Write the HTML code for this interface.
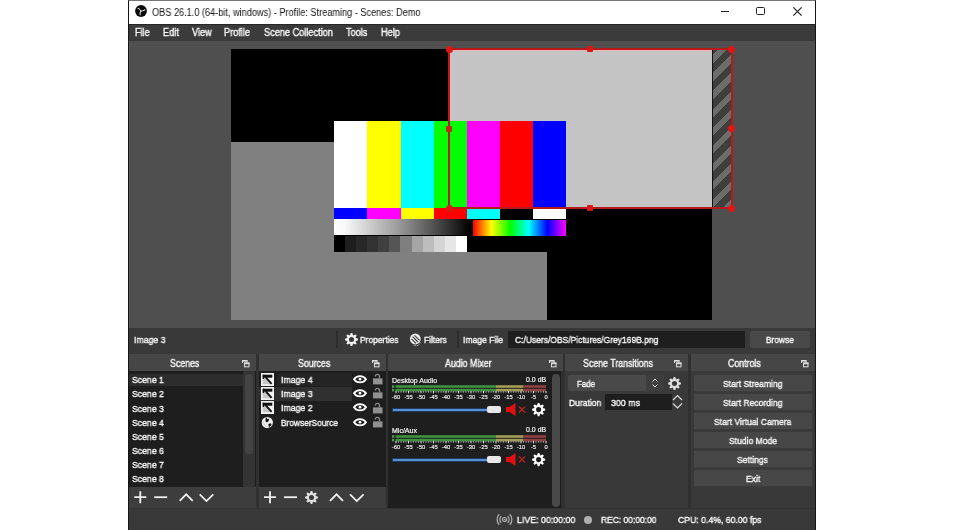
<!DOCTYPE html>
<html><head><meta charset="utf-8">
<style>
*{margin:0;padding:0;box-sizing:border-box}
html,body{width:960px;height:530px;overflow:hidden;background:#fff;font-family:"Liberation Sans",sans-serif}
.a{position:absolute}
.t{position:absolute;white-space:nowrap;color:#e1e0e1;line-height:1;will-change:transform}
svg{position:absolute;overflow:visible}
</style></head><body>
<div class="a" style="left:128px;top:0px;width:688px;height:530px;background:#3a393a;border-left:1px solid #151515;border-right:1px solid #151515;border-top:1px solid #777"></div>
<div class="a" style="left:129px;top:1px;width:686px;height:23px;background:#fff;"></div>
<svg style="left:135.2px;top:5.3px" width="12" height="12" viewBox="-6 -6 12 12"><circle r="5.9" fill="#0a0a0a"/><g fill="none" stroke="#fff" stroke-width="0.9"><path d="M0 0L-0.8 -1.2Q-2.2 -3 -3.4 -2.6"/><path d="M0 0L-0.8 -1.2Q-2.2 -3 -3.4 -2.6" transform="rotate(120)"/><path d="M0 0L-0.8 -1.2Q-2.2 -3 -3.4 -2.6" transform="rotate(240)"/></g></svg>
<div class="t" style="left:151.50px;top:7.54px;font-size:10px;color:#111;transform:scaleX(0.9167);transform-origin:0 0;">OBS 26.1.0 (64-bit, windows) - Profile: Streaming - Scenes: Demo</div>
<div class="a" style="left:721px;top:11px;width:8px;height:1.2px;background:#222;"></div>
<div class="a" style="left:756px;top:7px;width:9px;height:8.3px;background:transparent;border:1.3px solid #222;border-radius:1.5px"></div>
<svg style="left:792.5px;top:7px" width="9" height="9" viewBox="0 0 9 9"><path d="M0.4 0.4L8.6 8.6M8.6 0.4L0.4 8.6" stroke="#222" stroke-width="1.2"/></svg>
<div class="a" style="left:129px;top:24px;width:686px;height:17px;background:#3b3b3b;border-top:1.5px solid #262626"></div>
<div class="t" style="left:135.30px;top:28.04px;font-size:10px;color:#f6f6f6;transform:scaleX(0.9170);transform-origin:0 0;-webkit-text-stroke:0.4px #f6f6f6;">File</div>
<div class="t" style="left:162.50px;top:28.04px;font-size:10px;color:#f6f6f6;transform:scaleX(0.9170);transform-origin:0 0;-webkit-text-stroke:0.4px #f6f6f6;">Edit</div>
<div class="t" style="left:191.60px;top:28.04px;font-size:10px;color:#f6f6f6;transform:scaleX(0.9170);transform-origin:0 0;-webkit-text-stroke:0.4px #f6f6f6;">View</div>
<div class="t" style="left:224.40px;top:28.04px;font-size:10px;color:#f6f6f6;transform:scaleX(0.9170);transform-origin:0 0;-webkit-text-stroke:0.4px #f6f6f6;">Profile</div>
<div class="t" style="left:264.00px;top:28.04px;font-size:10px;color:#f6f6f6;transform:scaleX(0.9170);transform-origin:0 0;-webkit-text-stroke:0.4px #f6f6f6;">Scene Collection</div>
<div class="t" style="left:346.20px;top:28.04px;font-size:10px;color:#f6f6f6;transform:scaleX(0.9170);transform-origin:0 0;-webkit-text-stroke:0.4px #f6f6f6;">Tools</div>
<div class="t" style="left:381.20px;top:28.04px;font-size:10px;color:#f6f6f6;transform:scaleX(0.9170);transform-origin:0 0;-webkit-text-stroke:0.4px #f6f6f6;">Help</div>
<div class="a" style="left:129px;top:41px;width:686px;height:287px;background:#4f4f4f;border-left:1px solid #5a5a5a"></div>
<div class="a" style="left:231px;top:49px;width:481px;height:271px;background:#000;overflow:hidden">
  <div class="a" style="left:0;top:93px;width:316px;height:178px;background:#808080"></div>
  <div class="a" style="left:218px;top:0;width:263px;height:159px;background:#c4c4c4"></div>
</div>
<div class="a" style="left:712px;top:50px;width:19px;height:158px;background:repeating-linear-gradient(-45deg,#6c6c6c 0,#6c6c6c 5.9px,#3e3e3e 5.9px,#3e3e3e 12.8px);border-left:1px solid #111"></div>
<div class="a" style="left:334px;top:121px;width:232px;height:131px;background:#000;overflow:hidden">
<div class="a" style="left:0px;top:0;width:33px;height:87px;background:#fff"></div>
<div class="a" style="left:0px;top:87px;width:33px;height:11px;background:#00f"></div>
<div class="a" style="left:33px;top:0;width:34px;height:87px;background:#ff0"></div>
<div class="a" style="left:33px;top:87px;width:34px;height:11px;background:#f0f"></div>
<div class="a" style="left:67px;top:0;width:33px;height:87px;background:#0ff"></div>
<div class="a" style="left:67px;top:87px;width:33px;height:11px;background:#ff0"></div>
<div class="a" style="left:100px;top:0;width:33px;height:87px;background:#0f0"></div>
<div class="a" style="left:100px;top:87px;width:33px;height:11px;background:#f00"></div>
<div class="a" style="left:133px;top:0;width:33px;height:87px;background:#f0f"></div>
<div class="a" style="left:133px;top:87px;width:33px;height:11px;background:#0ff"></div>
<div class="a" style="left:166px;top:0;width:33px;height:87px;background:#f00"></div>
<div class="a" style="left:166px;top:87px;width:33px;height:11px;background:#000"></div>
<div class="a" style="left:199px;top:0;width:33px;height:87px;background:#00f"></div>
<div class="a" style="left:199px;top:87px;width:33px;height:11px;background:#fff"></div>
<div class="a" style="left:0;top:98px;width:136px;height:16px;background:linear-gradient(90deg,#fff 0%,#f8f8f8 8%,#999 48%,#555 72%,#1a1a1a 92%,#000 100%)"></div>
<div class="a" style="left:139px;top:99px;width:93px;height:16px;background:linear-gradient(90deg,#f00 0%,#ff0 20%,#0f0 40%,#0ff 60%,#00f 80%,#f0f 100%)"></div>
<div class="a" style="left:0;top:115px;width:133px;height:16px;background:linear-gradient(90deg,#000 0.00% 8.33%,#1e1e1e 8.33% 16.67%,#282828 16.67% 25.00%,#333 25.00% 33.33%,#404040 33.33% 41.67%,#555 41.67% 50.00%,#7f7f7f 50.00% 58.33%,#a5a5a5 58.33% 66.67%,#bdbdbd 66.67% 75.00%,#d4d4d4 75.00% 83.33%,#e6e6e6 83.33% 91.67%,#fff 91.67% 100.00%)"></div>
</div>
<div class="a" style="left:450px;top:50px;width:262px;height:1px;background:#f2b4b4"></div>
<div class="a" style="left:450px;top:50px;width:1px;height:71px;background:#f2b4b4"></div>
<div class="a" style="left:448px;top:48px;width:285px;height:161px;border:2px solid #b81a1a"></div>
<div class="a" style="left:445.5px;top:45.5px;width:7px;height:7px;background:#e01515;border-radius:50%"></div>
<div class="a" style="left:728.0px;top:45.5px;width:7px;height:7px;background:#e01515;border-radius:50%"></div>
<div class="a" style="left:728.0px;top:125.0px;width:7px;height:7px;background:#e01515;border-radius:50%"></div>
<div class="a" style="left:445.5px;top:204.5px;width:7px;height:7px;background:#e01515;border-radius:50%"></div>
<div class="a" style="left:728.0px;top:204.5px;width:7px;height:7px;background:#e01515;border-radius:50%"></div>
<div class="a" style="left:587px;top:46px;width:6px;height:6px;background:#d81818;border-radius:1px"></div>
<div class="a" style="left:587px;top:205px;width:6px;height:6px;background:#d81818;border-radius:1px"></div>
<div class="a" style="left:446px;top:125.5px;width:6px;height:6px;background:#c02a10;border-radius:1px"></div>
<div class="a" style="left:129px;top:328px;width:686px;height:24px;background:#3a393a;"></div>
<div class="t" style="left:133.50px;top:334.96px;font-size:9.5px;color:#f6f6f6;transform:scaleX(0.9206);transform-origin:0 0;-webkit-text-stroke:0.4px #f6f6f6;">Image 3</div>
<div class="a" style="left:336px;top:331px;width:2px;height:16.5px;background:#2e2d2e;"></div>
<svg style="left:344.9px;top:332.9px" width="13.0" height="13.0" viewBox="-10 -10 20 20"><path fill="#f2f2f2" d="M-2.53 -6.10 L-1.22 -9.93 L1.22 -9.93 L2.53 -6.10 L6.16 -7.88 L7.88 -6.16 L6.10 -2.53 L9.93 -1.22 L9.93 1.22 L6.10 2.53 L7.88 6.16 L6.16 7.88 L2.53 6.10 L1.22 9.93 L-1.22 9.93 L-2.53 6.10 L-6.16 7.88 L-7.88 6.16 L-6.10 2.53 L-9.93 1.22 L-9.93 -1.22 L-6.10 -2.53 L-7.88 -6.16 L-6.16 -7.88Z"/><circle r="3.9" fill="#3a393a"/></svg>
<div class="t" style="left:359.70px;top:334.76px;font-size:9.5px;color:#f6f6f6;transform:scaleX(0.8892);transform-origin:0 0;-webkit-text-stroke:0.4px #f6f6f6;">Properties</div>
<svg style="left:408.5px;top:332.5px" width="14" height="14" viewBox="0 0 14 14"><circle cx="6.3" cy="6" r="5.4" fill="#eeeeee"/><path d="M3.6 3.6l5.4 5.4M5.6 2.4l5 5M2.4 5.8l4.6 4.6" stroke="#3a393a" stroke-width="1.1"/><path d="M4.5 12.3A5 5 0 0 0 11.6 8.8" stroke="#d0d0d0" stroke-width="1" stroke-dasharray="1 0.8" fill="none"/></svg>
<div class="t" style="left:423.75px;top:334.76px;font-size:9.5px;color:#f6f6f6;transform:scaleX(0.8816);transform-origin:0 0;-webkit-text-stroke:0.4px #f6f6f6;">Filters</div>
<div class="a" style="left:456.5px;top:331px;width:2px;height:16.5px;background:#2e2d2e;"></div>
<div class="t" style="left:463.40px;top:334.76px;font-size:9.5px;color:#f6f6f6;transform:scaleX(0.9041);transform-origin:0 0;-webkit-text-stroke:0.4px #f6f6f6;">Image File</div>
<div class="a" style="left:508px;top:331px;width:236.5px;height:16.5px;background:#1f1e1f;"></div>
<div class="t" style="left:515.20px;top:334.76px;font-size:9.5px;color:#f6f6f6;transform:scaleX(0.8928);transform-origin:0 0;-webkit-text-stroke:0.4px #f6f6f6;">C:/Users/OBS/Pictures/Grey169B.png</div>
<div class="a" style="left:750px;top:331px;width:60px;height:16.5px;background:#4a494a;border-radius:2px"></div>
<div class="t" style="left:766.40px;top:334.76px;font-size:9.5px;color:#f6f6f6;transform:scaleX(0.8776);transform-origin:0 0;-webkit-text-stroke:0.4px #f6f6f6;">Browse</div>
<div class="a" style="left:255.5px;top:354px;width:3.0px;height:154px;background:#303030;"></div>
<div class="a" style="left:386px;top:354px;width:2px;height:154px;background:#303030;"></div>
<div class="a" style="left:561px;top:354px;width:3.5px;height:154px;background:#303030;"></div>
<div class="a" style="left:688px;top:354px;width:2.5px;height:154px;background:#303030;"></div>
<div class="a" style="left:129px;top:354px;width:126.5px;height:17px;background:#474647;"></div>
<div class="t" style="left:169.57px;top:358.54px;font-size:10px;color:#f6f6f6;transform:scaleX(0.8800);transform-origin:0 0;-webkit-text-stroke:0.4px #f6f6f6;">Scenes</div>
<svg style="left:241.5px;top:360px" width="8" height="8" viewBox="0 0 8 8"><path d="M0.5 3V0.5h4.5V2.5" fill="none" stroke="#e1e0e1" stroke-width="1"/><rect x="0" y="0" width="5.5" height="1.6" fill="#e1e0e1"/><rect x="2.5" y="3" width="4.5" height="3.8" fill="none" stroke="#e1e0e1" stroke-width="1"/><rect x="2" y="2.6" width="5.5" height="1.6" fill="#e1e0e1"/></svg>
<div class="a" style="left:258.5px;top:354px;width:127.5px;height:17px;background:#474647;"></div>
<div class="t" style="left:298.11px;top:358.54px;font-size:10px;color:#f6f6f6;transform:scaleX(0.8800);transform-origin:0 0;-webkit-text-stroke:0.4px #f6f6f6;">Sources</div>
<svg style="left:372px;top:360px" width="8" height="8" viewBox="0 0 8 8"><path d="M0.5 3V0.5h4.5V2.5" fill="none" stroke="#e1e0e1" stroke-width="1"/><rect x="0" y="0" width="5.5" height="1.6" fill="#e1e0e1"/><rect x="2.5" y="3" width="4.5" height="3.8" fill="none" stroke="#e1e0e1" stroke-width="1"/><rect x="2" y="2.6" width="5.5" height="1.6" fill="#e1e0e1"/></svg>
<div class="a" style="left:388px;top:354px;width:174.5px;height:17px;background:#474647;"></div>
<div class="t" style="left:445.02px;top:358.54px;font-size:10px;color:#f6f6f6;transform:scaleX(0.8800);transform-origin:0 0;-webkit-text-stroke:0.4px #f6f6f6;">Audio Mixer</div>
<svg style="left:548.5px;top:360px" width="8" height="8" viewBox="0 0 8 8"><path d="M0.5 3V0.5h4.5V2.5" fill="none" stroke="#e1e0e1" stroke-width="1"/><rect x="0" y="0" width="5.5" height="1.6" fill="#e1e0e1"/><rect x="2.5" y="3" width="4.5" height="3.8" fill="none" stroke="#e1e0e1" stroke-width="1"/><rect x="2" y="2.6" width="5.5" height="1.6" fill="#e1e0e1"/></svg>
<div class="a" style="left:564.5px;top:354px;width:123.5px;height:17px;background:#474647;"></div>
<div class="t" style="left:583.27px;top:358.54px;font-size:10px;color:#f6f6f6;transform:scaleX(0.8800);transform-origin:0 0;-webkit-text-stroke:0.4px #f6f6f6;">Scene Transitions</div>
<svg style="left:674px;top:360px" width="8" height="8" viewBox="0 0 8 8"><path d="M0.5 3V0.5h4.5V2.5" fill="none" stroke="#e1e0e1" stroke-width="1"/><rect x="0" y="0" width="5.5" height="1.6" fill="#e1e0e1"/><rect x="2.5" y="3" width="4.5" height="3.8" fill="none" stroke="#e1e0e1" stroke-width="1"/><rect x="2" y="2.6" width="5.5" height="1.6" fill="#e1e0e1"/></svg>
<div class="a" style="left:690.5px;top:354px;width:124.5px;height:17px;background:#474647;"></div>
<div class="t" style="left:728.37px;top:358.54px;font-size:10px;color:#f6f6f6;transform:scaleX(0.8800);transform-origin:0 0;-webkit-text-stroke:0.4px #f6f6f6;">Controls</div>
<svg style="left:801px;top:360px" width="8" height="8" viewBox="0 0 8 8"><path d="M0.5 3V0.5h4.5V2.5" fill="none" stroke="#e1e0e1" stroke-width="1"/><rect x="0" y="0" width="5.5" height="1.6" fill="#e1e0e1"/><rect x="2.5" y="3" width="4.5" height="3.8" fill="none" stroke="#e1e0e1" stroke-width="1"/><rect x="2" y="2.6" width="5.5" height="1.6" fill="#e1e0e1"/></svg>
<div class="a" style="left:129px;top:371px;width:126.5px;height:116px;background:#1f1e1f;"></div>
<div class="a" style="left:129px;top:373.5px;width:114px;height:12.5px;background:#2e2d2e;"></div>
<div class="t" style="left:131.80px;top:375.26px;font-size:9.5px;color:#f6f6f6;transform:scaleX(0.9151);transform-origin:0 0;-webkit-text-stroke:0.4px #f6f6f6;">Scene 1</div>
<div class="t" style="left:131.80px;top:389.43px;font-size:9.5px;color:#f6f6f6;transform:scaleX(0.9151);transform-origin:0 0;-webkit-text-stroke:0.4px #f6f6f6;">Scene 2</div>
<div class="t" style="left:131.80px;top:403.60px;font-size:9.5px;color:#f6f6f6;transform:scaleX(0.9151);transform-origin:0 0;-webkit-text-stroke:0.4px #f6f6f6;">Scene 3</div>
<div class="t" style="left:131.80px;top:417.77px;font-size:9.5px;color:#f6f6f6;transform:scaleX(0.9151);transform-origin:0 0;-webkit-text-stroke:0.4px #f6f6f6;">Scene 4</div>
<div class="t" style="left:131.80px;top:431.94px;font-size:9.5px;color:#f6f6f6;transform:scaleX(0.9151);transform-origin:0 0;-webkit-text-stroke:0.4px #f6f6f6;">Scene 5</div>
<div class="t" style="left:131.80px;top:446.11px;font-size:9.5px;color:#f6f6f6;transform:scaleX(0.9151);transform-origin:0 0;-webkit-text-stroke:0.4px #f6f6f6;">Scene 6</div>
<div class="t" style="left:131.80px;top:460.28px;font-size:9.5px;color:#f6f6f6;transform:scaleX(0.9151);transform-origin:0 0;-webkit-text-stroke:0.4px #f6f6f6;">Scene 7</div>
<div class="t" style="left:131.80px;top:474.45px;font-size:9.5px;color:#f6f6f6;transform:scaleX(0.9151);transform-origin:0 0;-webkit-text-stroke:0.4px #f6f6f6;">Scene 8</div>
<div class="a" style="left:243px;top:371px;width:11.5px;height:116px;background:#353435;"></div>
<div class="a" style="left:244.8px;top:373.5px;width:8.5px;height:80px;background:#454445;border-radius:3px"></div>
<div class="a" style="left:129px;top:487px;width:126.5px;height:21px;background:#3e3d3e;"></div>
<svg style="left:129px;top:487px" width="126" height="21" viewBox="0 0 126 21"><path d="M11.3 4.2v12M5.3 10.2h12" stroke="#f0f0f0" stroke-width="1.8"/><path d="M25.2 10.2h13" stroke="#f0f0f0" stroke-width="1.8"/><path d="M50.7 13.8l6.5-6.5 6.5 6.5" stroke="#f0f0f0" stroke-width="1.8" fill="none"/><path d="M70.7 7.3l6.8 6.8 6.8-6.8" stroke="#f0f0f0" stroke-width="1.8" fill="none"/></svg>
<div class="a" style="left:258.5px;top:371px;width:127.5px;height:116px;background:#1f1e1f;"></div>
<div class="a" style="left:258.5px;top:386.5px;width:93.5px;height:14px;background:#303030;"></div>
<div class="a" style="left:277px;top:372.7px;width:75px;height:13.3px;background:#252425;"></div>
<svg style="left:261px;top:373.0px" width="13" height="13" viewBox="0 0 13 13"><rect x="0" y="0" width="13" height="13" fill="#f4f4f4"/><rect x="1.7" y="1.7" width="9.6" height="3" fill="#111"/><rect x="1.7" y="1.7" width="1.6" height="4.4" fill="#111"/><path d="M1.7 6.1H3.3L4.7 4.7L10.2 11.3H1.7z" fill="#c8c8c8"/><path d="M4.6 4.2l6 6.6" stroke="#111" stroke-width="1.9"/></svg>
<div class="t" style="left:280.50px;top:375.06px;font-size:9.5px;color:#f6f6f6;transform:scaleX(0.9235);transform-origin:0 0;-webkit-text-stroke:0.4px #f6f6f6;">Image 4</div>
<svg style="left:352.5px;top:375.09999999999997px" width="14" height="10" viewBox="0 0 14 10"><path d="M1 4.2C3.6 0 10.4 0 13 4.2 10.4 8.4 3.6 8.4 1 4.2z" fill="none" stroke="#fff" stroke-width="1.8"/><circle cx="7" cy="4.2" r="1.4" fill="#fff"/></svg>
<svg style="left:372.7px;top:374.2px" width="10" height="11" viewBox="0 0 10 11"><rect x="0" y="4.4" width="9.5" height="6" fill="#929192"/><path d="M2.3 2.4a2.1 2.1 0 0 1 4.2 0V4.5" fill="none" stroke="#929192" stroke-width="1.3"/></svg>
<svg style="left:261px;top:387.15px" width="13" height="13" viewBox="0 0 13 13"><rect x="0" y="0" width="13" height="13" fill="#f4f4f4"/><rect x="1.7" y="1.7" width="9.6" height="3" fill="#111"/><rect x="1.7" y="1.7" width="1.6" height="4.4" fill="#111"/><path d="M1.7 6.1H3.3L4.7 4.7L10.2 11.3H1.7z" fill="#c8c8c8"/><path d="M4.6 4.2l6 6.6" stroke="#111" stroke-width="1.9"/></svg>
<div class="t" style="left:280.50px;top:389.21px;font-size:9.5px;color:#f6f6f6;transform:scaleX(0.9235);transform-origin:0 0;-webkit-text-stroke:0.4px #f6f6f6;">Image 3</div>
<svg style="left:352.5px;top:389.24999999999994px" width="14" height="10" viewBox="0 0 14 10"><path d="M1 4.2C3.6 0 10.4 0 13 4.2 10.4 8.4 3.6 8.4 1 4.2z" fill="none" stroke="#fff" stroke-width="1.8"/><circle cx="7" cy="4.2" r="1.4" fill="#fff"/></svg>
<svg style="left:372.7px;top:388.34999999999997px" width="10" height="11" viewBox="0 0 10 11"><rect x="0" y="4.4" width="9.5" height="6" fill="#929192"/><path d="M2.3 2.4a2.1 2.1 0 0 1 4.2 0V4.5" fill="none" stroke="#929192" stroke-width="1.3"/></svg>
<svg style="left:261px;top:401.3px" width="13" height="13" viewBox="0 0 13 13"><rect x="0" y="0" width="13" height="13" fill="#f4f4f4"/><rect x="1.7" y="1.7" width="9.6" height="3" fill="#111"/><rect x="1.7" y="1.7" width="1.6" height="4.4" fill="#111"/><path d="M1.7 6.1H3.3L4.7 4.7L10.2 11.3H1.7z" fill="#c8c8c8"/><path d="M4.6 4.2l6 6.6" stroke="#111" stroke-width="1.9"/></svg>
<div class="t" style="left:280.50px;top:403.36px;font-size:9.5px;color:#f6f6f6;transform:scaleX(0.9235);transform-origin:0 0;-webkit-text-stroke:0.4px #f6f6f6;">Image 2</div>
<svg style="left:352.5px;top:403.4px" width="14" height="10" viewBox="0 0 14 10"><path d="M1 4.2C3.6 0 10.4 0 13 4.2 10.4 8.4 3.6 8.4 1 4.2z" fill="none" stroke="#fff" stroke-width="1.8"/><circle cx="7" cy="4.2" r="1.4" fill="#fff"/></svg>
<svg style="left:372.7px;top:402.5px" width="10" height="11" viewBox="0 0 10 11"><rect x="0" y="4.4" width="9.5" height="6" fill="#929192"/><path d="M2.3 2.4a2.1 2.1 0 0 1 4.2 0V4.5" fill="none" stroke="#929192" stroke-width="1.3"/></svg>
<svg style="left:261px;top:415.84999999999997px" width="13" height="13" viewBox="0 0 13 13"><circle cx="6.3" cy="6.5" r="5.6" fill="#f0f0f0"/><path d="M5.2 1.2L6.6 3.2 8.3 2.4 7.6 5 6 6.6 4.4 5.2 4.6 3z" fill="#111"/><path d="M7.4 8L9.8 7.2 10.6 9 9 10.2 8.4 12 7.6 10z" fill="#111"/><path d="M2.2 5.5Q3 9.5 6 10.5" stroke="#bbb" stroke-width="0.8" fill="none"/></svg>
<div class="t" style="left:280.50px;top:417.51px;font-size:9.5px;color:#f6f6f6;transform:scaleX(0.8761);transform-origin:0 0;-webkit-text-stroke:0.4px #f6f6f6;">BrowserSource</div>
<svg style="left:352.5px;top:417.54999999999995px" width="14" height="10" viewBox="0 0 14 10"><path d="M1 4.2C3.6 0 10.4 0 13 4.2 10.4 8.4 3.6 8.4 1 4.2z" fill="none" stroke="#fff" stroke-width="1.8"/><circle cx="7" cy="4.2" r="1.4" fill="#fff"/></svg>
<svg style="left:372.7px;top:416.65px" width="10" height="11" viewBox="0 0 10 11"><rect x="0" y="4.4" width="9.5" height="6" fill="#929192"/><path d="M2.3 2.4a2.1 2.1 0 0 1 4.2 0V4.5" fill="none" stroke="#929192" stroke-width="1.3"/></svg>
<div class="a" style="left:258.5px;top:487px;width:126px;height:21px;background:#3e3d3e;"></div>
<svg style="left:258.5px;top:487px" width="127" height="21" viewBox="0 0 127 21"><path d="M11 4.2v12M5 10.2h12" stroke="#f0f0f0" stroke-width="1.8"/><path d="M25 10.2h13" stroke="#f0f0f0" stroke-width="1.8"/><path d="M71 13.8l6.5-6.5 6.5 6.5" stroke="#f0f0f0" stroke-width="1.8" fill="none"/><path d="M91 7.3l6.8 6.8 6.8-6.8" stroke="#f0f0f0" stroke-width="1.8" fill="none"/></svg>
<svg style="left:305.0px;top:490.5px" width="13.0" height="13.0" viewBox="-10 -10 20 20"><path fill="#e1e0e1" d="M-2.53 -6.10 L-1.22 -9.93 L1.22 -9.93 L2.53 -6.10 L6.16 -7.88 L7.88 -6.16 L6.10 -2.53 L9.93 -1.22 L9.93 1.22 L6.10 2.53 L7.88 6.16 L6.16 7.88 L2.53 6.10 L1.22 9.93 L-1.22 9.93 L-2.53 6.10 L-6.16 7.88 L-7.88 6.16 L-6.10 2.53 L-9.93 1.22 L-9.93 -1.22 L-6.10 -2.53 L-7.88 -6.16 L-6.16 -7.88Z"/><circle r="3.9" fill="#3a393a"/></svg>
<div class="a" style="left:388px;top:371px;width:173px;height:137px;background:#1f1e1f;"></div>
<div class="a" style="left:551.8px;top:373.5px;width:7.9px;height:133px;background:#4a494a;border-radius:4px"></div>
<div class="t" style="left:392.40px;top:376.57px;font-size:7px;color:#f6f6f6;-webkit-text-stroke:0.2px #f2f2f2">Desktop Audio</div>
<div class="t" style="right:413.4px;top:376.17px;font-size:7px;color:#f2f2f2;-webkit-text-stroke:0.2px #f2f2f2">0.0 dB</div>
<svg style="left:388px;top:385.0px" width="163" height="20" viewBox="388 385.0 163 20"><rect x="392" y="385.2" width="2.2" height="2.6" fill="#4a9a4a"/><rect x="395.5" y="385.2" width="100.5" height="2.6" fill="#3f903f"/><rect x="496.0" y="385.2" width="27.5" height="2.6" fill="#a39d55"/><rect x="523.5" y="385.2" width="22.5" height="2.6" fill="#8f4040"/><rect x="392" y="388.8" width="2.2" height="2.6" fill="#4a9a4a"/><rect x="395.5" y="388.8" width="100.5" height="2.6" fill="#3f903f"/><rect x="496.0" y="388.8" width="27.5" height="2.6" fill="#a39d55"/><rect x="523.5" y="388.8" width="22.5" height="2.6" fill="#8f4040"/><rect x="395.5" y="390.9" width="1" height="2.4" fill="#e8e8e8"/><rect x="398.0" y="390.9" width="1" height="1.8" fill="#9a9a9a"/><rect x="400.5" y="390.9" width="1" height="1.8" fill="#9a9a9a"/><rect x="403.0" y="390.9" width="1" height="1.8" fill="#9a9a9a"/><rect x="405.5" y="390.9" width="1" height="1.8" fill="#9a9a9a"/><rect x="408.0" y="390.9" width="1" height="2.4" fill="#e8e8e8"/><rect x="410.5" y="390.9" width="1" height="1.8" fill="#9a9a9a"/><rect x="413.0" y="390.9" width="1" height="1.8" fill="#9a9a9a"/><rect x="415.5" y="390.9" width="1" height="1.8" fill="#9a9a9a"/><rect x="418.0" y="390.9" width="1" height="1.8" fill="#9a9a9a"/><rect x="420.5" y="390.9" width="1" height="2.4" fill="#e8e8e8"/><rect x="423.0" y="390.9" width="1" height="1.8" fill="#9a9a9a"/><rect x="425.5" y="390.9" width="1" height="1.8" fill="#9a9a9a"/><rect x="428.0" y="390.9" width="1" height="1.8" fill="#9a9a9a"/><rect x="430.5" y="390.9" width="1" height="1.8" fill="#9a9a9a"/><rect x="433.0" y="390.9" width="1" height="2.4" fill="#e8e8e8"/><rect x="435.5" y="390.9" width="1" height="1.8" fill="#9a9a9a"/><rect x="438.0" y="390.9" width="1" height="1.8" fill="#9a9a9a"/><rect x="440.5" y="390.9" width="1" height="1.8" fill="#9a9a9a"/><rect x="443.0" y="390.9" width="1" height="1.8" fill="#9a9a9a"/><rect x="445.5" y="390.9" width="1" height="2.4" fill="#e8e8e8"/><rect x="448.0" y="390.9" width="1" height="1.8" fill="#9a9a9a"/><rect x="450.5" y="390.9" width="1" height="1.8" fill="#9a9a9a"/><rect x="453.0" y="390.9" width="1" height="1.8" fill="#9a9a9a"/><rect x="455.5" y="390.9" width="1" height="1.8" fill="#9a9a9a"/><rect x="458.0" y="390.9" width="1" height="2.4" fill="#e8e8e8"/><rect x="460.5" y="390.9" width="1" height="1.8" fill="#9a9a9a"/><rect x="463.0" y="390.9" width="1" height="1.8" fill="#9a9a9a"/><rect x="465.5" y="390.9" width="1" height="1.8" fill="#9a9a9a"/><rect x="468.0" y="390.9" width="1" height="1.8" fill="#9a9a9a"/><rect x="470.5" y="390.9" width="1" height="2.4" fill="#e8e8e8"/><rect x="473.0" y="390.9" width="1" height="1.8" fill="#9a9a9a"/><rect x="475.5" y="390.9" width="1" height="1.8" fill="#9a9a9a"/><rect x="478.0" y="390.9" width="1" height="1.8" fill="#9a9a9a"/><rect x="480.5" y="390.9" width="1" height="1.8" fill="#9a9a9a"/><rect x="483.0" y="390.9" width="1" height="2.4" fill="#e8e8e8"/><rect x="485.5" y="390.9" width="1" height="1.8" fill="#9a9a9a"/><rect x="488.0" y="390.9" width="1" height="1.8" fill="#9a9a9a"/><rect x="490.5" y="390.9" width="1" height="1.8" fill="#9a9a9a"/><rect x="493.0" y="390.9" width="1" height="1.8" fill="#9a9a9a"/><rect x="495.5" y="390.9" width="1" height="2.4" fill="#e8e8e8"/><rect x="498.0" y="390.9" width="1" height="1.8" fill="#9a9a9a"/><rect x="500.5" y="390.9" width="1" height="1.8" fill="#9a9a9a"/><rect x="503.0" y="390.9" width="1" height="1.8" fill="#9a9a9a"/><rect x="505.5" y="390.9" width="1" height="1.8" fill="#9a9a9a"/><rect x="508.0" y="390.9" width="1" height="2.4" fill="#e8e8e8"/><rect x="510.5" y="390.9" width="1" height="1.8" fill="#9a9a9a"/><rect x="513.0" y="390.9" width="1" height="1.8" fill="#9a9a9a"/><rect x="515.5" y="390.9" width="1" height="1.8" fill="#9a9a9a"/><rect x="518.0" y="390.9" width="1" height="1.8" fill="#9a9a9a"/><rect x="520.5" y="390.9" width="1" height="2.4" fill="#e8e8e8"/><rect x="523.0" y="390.9" width="1" height="1.8" fill="#9a9a9a"/><rect x="525.5" y="390.9" width="1" height="1.8" fill="#9a9a9a"/><rect x="528.0" y="390.9" width="1" height="1.8" fill="#9a9a9a"/><rect x="530.5" y="390.9" width="1" height="1.8" fill="#9a9a9a"/><rect x="533.0" y="390.9" width="1" height="2.4" fill="#e8e8e8"/><rect x="535.5" y="390.9" width="1" height="1.8" fill="#9a9a9a"/><rect x="538.0" y="390.9" width="1" height="1.8" fill="#9a9a9a"/><rect x="540.5" y="390.9" width="1" height="1.8" fill="#9a9a9a"/><rect x="543.0" y="390.9" width="1" height="1.8" fill="#9a9a9a"/><rect x="545.5" y="390.9" width="1" height="2.4" fill="#e8e8e8"/><text x="396.0" y="398.6" font-size="5.8" fill="#f0f0f0" stroke="#f0f0f0" stroke-width="0.15" text-anchor="middle" font-family="Liberation Sans">-60</text><text x="408.5" y="398.6" font-size="5.8" fill="#f0f0f0" stroke="#f0f0f0" stroke-width="0.15" text-anchor="middle" font-family="Liberation Sans">-55</text><text x="421.0" y="398.6" font-size="5.8" fill="#f0f0f0" stroke="#f0f0f0" stroke-width="0.15" text-anchor="middle" font-family="Liberation Sans">-50</text><text x="433.5" y="398.6" font-size="5.8" fill="#f0f0f0" stroke="#f0f0f0" stroke-width="0.15" text-anchor="middle" font-family="Liberation Sans">-45</text><text x="446.0" y="398.6" font-size="5.8" fill="#f0f0f0" stroke="#f0f0f0" stroke-width="0.15" text-anchor="middle" font-family="Liberation Sans">-40</text><text x="458.5" y="398.6" font-size="5.8" fill="#f0f0f0" stroke="#f0f0f0" stroke-width="0.15" text-anchor="middle" font-family="Liberation Sans">-35</text><text x="471.0" y="398.6" font-size="5.8" fill="#f0f0f0" stroke="#f0f0f0" stroke-width="0.15" text-anchor="middle" font-family="Liberation Sans">-30</text><text x="483.5" y="398.6" font-size="5.8" fill="#f0f0f0" stroke="#f0f0f0" stroke-width="0.15" text-anchor="middle" font-family="Liberation Sans">-25</text><text x="496.0" y="398.6" font-size="5.8" fill="#f0f0f0" stroke="#f0f0f0" stroke-width="0.15" text-anchor="middle" font-family="Liberation Sans">-20</text><text x="508.5" y="398.6" font-size="5.8" fill="#f0f0f0" stroke="#f0f0f0" stroke-width="0.15" text-anchor="middle" font-family="Liberation Sans">-15</text><text x="521.0" y="398.6" font-size="5.8" fill="#f0f0f0" stroke="#f0f0f0" stroke-width="0.15" text-anchor="middle" font-family="Liberation Sans">-10</text><text x="533.5" y="398.6" font-size="5.8" fill="#f0f0f0" stroke="#f0f0f0" stroke-width="0.15" text-anchor="middle" font-family="Liberation Sans">-5</text><text x="546.0" y="398.6" font-size="5.8" fill="#f0f0f0" stroke="#f0f0f0" stroke-width="0.15" text-anchor="middle" font-family="Liberation Sans">0</text></svg>
<div class="a" style="left:392px;top:407.5px;width:96px;height:4px;background:#5b8fd1;border:1px solid #1b3a66;border-radius:1px"></div>
<div class="a" style="left:486.7px;top:406.0px;width:14px;height:7px;background:#e8e8e8;border-radius:2px"></div>
<svg style="left:506px;top:403.0px" width="20" height="13" viewBox="0 0 20 13"><path d="M0 4h3.5L9.5 0v13L3.5 9H0z" fill="#e01010"/><path d="M13 3.5l6 6M19 3.5l-6 6" stroke="#b82020" stroke-width="1.4"/></svg>
<svg style="left:531.6999999999999px;top:402.9px" width="13.2" height="13.2" viewBox="-10 -10 20 20"><path fill="#ffffff" d="M-2.53 -6.10 L-1.22 -9.93 L1.22 -9.93 L2.53 -6.10 L6.16 -7.88 L7.88 -6.16 L6.10 -2.53 L9.93 -1.22 L9.93 1.22 L6.10 2.53 L7.88 6.16 L6.16 7.88 L2.53 6.10 L1.22 9.93 L-1.22 9.93 L-2.53 6.10 L-6.16 7.88 L-7.88 6.16 L-6.10 2.53 L-9.93 1.22 L-9.93 -1.22 L-6.10 -2.53 L-7.88 -6.16 L-6.16 -7.88Z"/><circle r="3.9" fill="#1f1e1f"/></svg>
<div class="t" style="left:392.40px;top:426.57px;font-size:7px;color:#f6f6f6;-webkit-text-stroke:0.2px #f2f2f2">Mic/Aux</div>
<div class="t" style="right:413.4px;top:426.17px;font-size:7px;color:#f2f2f2;-webkit-text-stroke:0.2px #f2f2f2">0.0 dB</div>
<svg style="left:388px;top:435.0px" width="163" height="20" viewBox="388 435.0 163 20"><rect x="392" y="435.2" width="2.2" height="2.6" fill="#4a9a4a"/><rect x="395.5" y="435.2" width="100.5" height="2.6" fill="#3f903f"/><rect x="496.0" y="435.2" width="27.5" height="2.6" fill="#a39d55"/><rect x="523.5" y="435.2" width="22.5" height="2.6" fill="#8f4040"/><rect x="392" y="438.8" width="2.2" height="2.6" fill="#4a9a4a"/><rect x="395.5" y="438.8" width="100.5" height="2.6" fill="#3f903f"/><rect x="496.0" y="438.8" width="27.5" height="2.6" fill="#a39d55"/><rect x="523.5" y="438.8" width="22.5" height="2.6" fill="#8f4040"/><rect x="395.5" y="440.9" width="1" height="2.4" fill="#e8e8e8"/><rect x="398.0" y="440.9" width="1" height="1.8" fill="#9a9a9a"/><rect x="400.5" y="440.9" width="1" height="1.8" fill="#9a9a9a"/><rect x="403.0" y="440.9" width="1" height="1.8" fill="#9a9a9a"/><rect x="405.5" y="440.9" width="1" height="1.8" fill="#9a9a9a"/><rect x="408.0" y="440.9" width="1" height="2.4" fill="#e8e8e8"/><rect x="410.5" y="440.9" width="1" height="1.8" fill="#9a9a9a"/><rect x="413.0" y="440.9" width="1" height="1.8" fill="#9a9a9a"/><rect x="415.5" y="440.9" width="1" height="1.8" fill="#9a9a9a"/><rect x="418.0" y="440.9" width="1" height="1.8" fill="#9a9a9a"/><rect x="420.5" y="440.9" width="1" height="2.4" fill="#e8e8e8"/><rect x="423.0" y="440.9" width="1" height="1.8" fill="#9a9a9a"/><rect x="425.5" y="440.9" width="1" height="1.8" fill="#9a9a9a"/><rect x="428.0" y="440.9" width="1" height="1.8" fill="#9a9a9a"/><rect x="430.5" y="440.9" width="1" height="1.8" fill="#9a9a9a"/><rect x="433.0" y="440.9" width="1" height="2.4" fill="#e8e8e8"/><rect x="435.5" y="440.9" width="1" height="1.8" fill="#9a9a9a"/><rect x="438.0" y="440.9" width="1" height="1.8" fill="#9a9a9a"/><rect x="440.5" y="440.9" width="1" height="1.8" fill="#9a9a9a"/><rect x="443.0" y="440.9" width="1" height="1.8" fill="#9a9a9a"/><rect x="445.5" y="440.9" width="1" height="2.4" fill="#e8e8e8"/><rect x="448.0" y="440.9" width="1" height="1.8" fill="#9a9a9a"/><rect x="450.5" y="440.9" width="1" height="1.8" fill="#9a9a9a"/><rect x="453.0" y="440.9" width="1" height="1.8" fill="#9a9a9a"/><rect x="455.5" y="440.9" width="1" height="1.8" fill="#9a9a9a"/><rect x="458.0" y="440.9" width="1" height="2.4" fill="#e8e8e8"/><rect x="460.5" y="440.9" width="1" height="1.8" fill="#9a9a9a"/><rect x="463.0" y="440.9" width="1" height="1.8" fill="#9a9a9a"/><rect x="465.5" y="440.9" width="1" height="1.8" fill="#9a9a9a"/><rect x="468.0" y="440.9" width="1" height="1.8" fill="#9a9a9a"/><rect x="470.5" y="440.9" width="1" height="2.4" fill="#e8e8e8"/><rect x="473.0" y="440.9" width="1" height="1.8" fill="#9a9a9a"/><rect x="475.5" y="440.9" width="1" height="1.8" fill="#9a9a9a"/><rect x="478.0" y="440.9" width="1" height="1.8" fill="#9a9a9a"/><rect x="480.5" y="440.9" width="1" height="1.8" fill="#9a9a9a"/><rect x="483.0" y="440.9" width="1" height="2.4" fill="#e8e8e8"/><rect x="485.5" y="440.9" width="1" height="1.8" fill="#9a9a9a"/><rect x="488.0" y="440.9" width="1" height="1.8" fill="#9a9a9a"/><rect x="490.5" y="440.9" width="1" height="1.8" fill="#9a9a9a"/><rect x="493.0" y="440.9" width="1" height="1.8" fill="#9a9a9a"/><rect x="495.5" y="440.9" width="1" height="2.4" fill="#e8e8e8"/><rect x="498.0" y="440.9" width="1" height="1.8" fill="#9a9a9a"/><rect x="500.5" y="440.9" width="1" height="1.8" fill="#9a9a9a"/><rect x="503.0" y="440.9" width="1" height="1.8" fill="#9a9a9a"/><rect x="505.5" y="440.9" width="1" height="1.8" fill="#9a9a9a"/><rect x="508.0" y="440.9" width="1" height="2.4" fill="#e8e8e8"/><rect x="510.5" y="440.9" width="1" height="1.8" fill="#9a9a9a"/><rect x="513.0" y="440.9" width="1" height="1.8" fill="#9a9a9a"/><rect x="515.5" y="440.9" width="1" height="1.8" fill="#9a9a9a"/><rect x="518.0" y="440.9" width="1" height="1.8" fill="#9a9a9a"/><rect x="520.5" y="440.9" width="1" height="2.4" fill="#e8e8e8"/><rect x="523.0" y="440.9" width="1" height="1.8" fill="#9a9a9a"/><rect x="525.5" y="440.9" width="1" height="1.8" fill="#9a9a9a"/><rect x="528.0" y="440.9" width="1" height="1.8" fill="#9a9a9a"/><rect x="530.5" y="440.9" width="1" height="1.8" fill="#9a9a9a"/><rect x="533.0" y="440.9" width="1" height="2.4" fill="#e8e8e8"/><rect x="535.5" y="440.9" width="1" height="1.8" fill="#9a9a9a"/><rect x="538.0" y="440.9" width="1" height="1.8" fill="#9a9a9a"/><rect x="540.5" y="440.9" width="1" height="1.8" fill="#9a9a9a"/><rect x="543.0" y="440.9" width="1" height="1.8" fill="#9a9a9a"/><rect x="545.5" y="440.9" width="1" height="2.4" fill="#e8e8e8"/><text x="396.0" y="448.6" font-size="5.8" fill="#f0f0f0" stroke="#f0f0f0" stroke-width="0.15" text-anchor="middle" font-family="Liberation Sans">-60</text><text x="408.5" y="448.6" font-size="5.8" fill="#f0f0f0" stroke="#f0f0f0" stroke-width="0.15" text-anchor="middle" font-family="Liberation Sans">-55</text><text x="421.0" y="448.6" font-size="5.8" fill="#f0f0f0" stroke="#f0f0f0" stroke-width="0.15" text-anchor="middle" font-family="Liberation Sans">-50</text><text x="433.5" y="448.6" font-size="5.8" fill="#f0f0f0" stroke="#f0f0f0" stroke-width="0.15" text-anchor="middle" font-family="Liberation Sans">-45</text><text x="446.0" y="448.6" font-size="5.8" fill="#f0f0f0" stroke="#f0f0f0" stroke-width="0.15" text-anchor="middle" font-family="Liberation Sans">-40</text><text x="458.5" y="448.6" font-size="5.8" fill="#f0f0f0" stroke="#f0f0f0" stroke-width="0.15" text-anchor="middle" font-family="Liberation Sans">-35</text><text x="471.0" y="448.6" font-size="5.8" fill="#f0f0f0" stroke="#f0f0f0" stroke-width="0.15" text-anchor="middle" font-family="Liberation Sans">-30</text><text x="483.5" y="448.6" font-size="5.8" fill="#f0f0f0" stroke="#f0f0f0" stroke-width="0.15" text-anchor="middle" font-family="Liberation Sans">-25</text><text x="496.0" y="448.6" font-size="5.8" fill="#f0f0f0" stroke="#f0f0f0" stroke-width="0.15" text-anchor="middle" font-family="Liberation Sans">-20</text><text x="508.5" y="448.6" font-size="5.8" fill="#f0f0f0" stroke="#f0f0f0" stroke-width="0.15" text-anchor="middle" font-family="Liberation Sans">-15</text><text x="521.0" y="448.6" font-size="5.8" fill="#f0f0f0" stroke="#f0f0f0" stroke-width="0.15" text-anchor="middle" font-family="Liberation Sans">-10</text><text x="533.5" y="448.6" font-size="5.8" fill="#f0f0f0" stroke="#f0f0f0" stroke-width="0.15" text-anchor="middle" font-family="Liberation Sans">-5</text><text x="546.0" y="448.6" font-size="5.8" fill="#f0f0f0" stroke="#f0f0f0" stroke-width="0.15" text-anchor="middle" font-family="Liberation Sans">0</text></svg>
<div class="a" style="left:392px;top:457.5px;width:96px;height:4px;background:#5b8fd1;border:1px solid #1b3a66;border-radius:1px"></div>
<div class="a" style="left:486.7px;top:456.0px;width:14px;height:7px;background:#e8e8e8;border-radius:2px"></div>
<svg style="left:506px;top:453.0px" width="20" height="13" viewBox="0 0 20 13"><path d="M0 4h3.5L9.5 0v13L3.5 9H0z" fill="#e01010"/><path d="M13 3.5l6 6M19 3.5l-6 6" stroke="#b82020" stroke-width="1.4"/></svg>
<svg style="left:531.6999999999999px;top:452.9px" width="13.2" height="13.2" viewBox="-10 -10 20 20"><path fill="#ffffff" d="M-2.53 -6.10 L-1.22 -9.93 L1.22 -9.93 L2.53 -6.10 L6.16 -7.88 L7.88 -6.16 L6.10 -2.53 L9.93 -1.22 L9.93 1.22 L6.10 2.53 L7.88 6.16 L6.16 7.88 L2.53 6.10 L1.22 9.93 L-1.22 9.93 L-2.53 6.10 L-6.16 7.88 L-7.88 6.16 L-6.10 2.53 L-9.93 1.22 L-9.93 -1.22 L-6.10 -2.53 L-7.88 -6.16 L-6.16 -7.88Z"/><circle r="3.9" fill="#1f1e1f"/></svg>
<div class="a" style="left:568.3px;top:375px;width:78px;height:15.7px;background:#4a494a;border-radius:2px 0 0 2px"></div>
<div class="a" style="left:646px;top:375px;width:18px;height:15.7px;background:#3f3e3f;border-radius:0 2px 2px 0"></div>
<div class="t" style="left:576.60px;top:378.56px;font-size:9.5px;color:#f6f6f6;transform:scaleX(0.8359);transform-origin:0 0;-webkit-text-stroke:0.4px #f6f6f6;">Fade</div>
<svg style="left:650px;top:377px" width="10" height="12" viewBox="0 0 10 12"><path d="M2.5 4.5L5 2l2.5 2.5M2.5 7.5L5 10l2.5-2.5" stroke="#e1e0e1" stroke-width="1" fill="none"/></svg>
<svg style="left:668.1px;top:376.5px" width="13.0" height="13.0" viewBox="-10 -10 20 20"><path fill="#e1e0e1" d="M-2.53 -6.10 L-1.22 -9.93 L1.22 -9.93 L2.53 -6.10 L6.16 -7.88 L7.88 -6.16 L6.10 -2.53 L9.93 -1.22 L9.93 1.22 L6.10 2.53 L7.88 6.16 L6.16 7.88 L2.53 6.10 L1.22 9.93 L-1.22 9.93 L-2.53 6.10 L-6.16 7.88 L-7.88 6.16 L-6.10 2.53 L-9.93 1.22 L-9.93 -1.22 L-6.10 -2.53 L-7.88 -6.16 L-6.16 -7.88Z"/><circle r="3.9" fill="#3a393a"/></svg>
<div class="t" style="left:568.75px;top:397.76px;font-size:9.5px;color:#f6f6f6;transform:scaleX(0.8995);transform-origin:0 0;-webkit-text-stroke:0.4px #f6f6f6;">Duration</div>
<div class="a" style="left:605.3px;top:393.7px;width:66.3px;height:16px;background:#1f1e1f;"></div>
<div class="t" style="left:611.30px;top:397.76px;font-size:9.5px;color:#f6f6f6;transform:scaleX(0.9309);transform-origin:0 0;-webkit-text-stroke:0.4px #f6f6f6;">300 ms</div>
<svg style="left:671px;top:393px" width="13" height="17" viewBox="0 0 13 17"><path d="M2 7l4.5-4.5L11 7M2 10.5l4.5 4.5 4.5-4.5" stroke="#e1e0e1" stroke-width="1.1" fill="none"/></svg>
<div class="a" style="left:693px;top:374px;width:119.5px;height:18px;background:#484748;border:1px solid #3c3b3c;border-radius:2px"></div>
<div class="t" style="left:723.05px;top:378.56px;font-size:9.5px;color:#f6f6f6;transform:scaleX(0.9000);transform-origin:0 0;-webkit-text-stroke:0.4px #f6f6f6;">Start Streaming</div>
<div class="a" style="left:693px;top:393px;width:119.5px;height:18px;background:#484748;border:1px solid #3c3b3c;border-radius:2px"></div>
<div class="t" style="left:723.05px;top:397.56px;font-size:9.5px;color:#f6f6f6;transform:scaleX(0.9000);transform-origin:0 0;-webkit-text-stroke:0.4px #f6f6f6;">Start Recording</div>
<div class="a" style="left:693px;top:412px;width:119.5px;height:18px;background:#484748;border:1px solid #3c3b3c;border-radius:2px"></div>
<div class="t" style="left:714.10px;top:416.56px;font-size:9.5px;color:#f6f6f6;transform:scaleX(0.9000);transform-origin:0 0;-webkit-text-stroke:0.4px #f6f6f6;">Start Virtual Camera</div>
<div class="a" style="left:693px;top:431px;width:119.5px;height:18px;background:#484748;border:1px solid #3c3b3c;border-radius:2px"></div>
<div class="t" style="left:728.75px;top:435.56px;font-size:9.5px;color:#f6f6f6;transform:scaleX(0.9000);transform-origin:0 0;-webkit-text-stroke:0.4px #f6f6f6;">Studio Mode</div>
<div class="a" style="left:693px;top:450px;width:119.5px;height:18px;background:#484748;border:1px solid #3c3b3c;border-radius:2px"></div>
<div class="t" style="left:737.30px;top:454.56px;font-size:9.5px;color:#f6f6f6;transform:scaleX(0.9000);transform-origin:0 0;-webkit-text-stroke:0.4px #f6f6f6;">Settings</div>
<div class="a" style="left:693px;top:469px;width:119.5px;height:18px;background:#484748;border:1px solid #3c3b3c;border-radius:2px"></div>
<div class="t" style="left:745.62px;top:473.56px;font-size:9.5px;color:#f6f6f6;transform:scaleX(0.9000);transform-origin:0 0;-webkit-text-stroke:0.4px #f6f6f6;">Exit</div>
<div class="a" style="left:129px;top:508px;width:686px;height:22px;background:#3a393a;border-top:1px solid #333"></div>
<svg style="left:497px;top:513px" width="15" height="13" viewBox="0 0 15 13"><circle cx="7.5" cy="6.5" r="2" fill="none" stroke="#b4b4b4" stroke-width="1.2"/><circle cx="7.5" cy="6.5" r="0.7" fill="#b4b4b4"/><path d="M4.3 3.3a4.3 4.3 0 0 0 0 6.4M10.7 3.3a4.3 4.3 0 0 1 0 6.4M2.3 1.3a7.2 7.2 0 0 0 0 10.4M12.7 1.3a7.2 7.2 0 0 1 0 10.4" stroke="#b4b4b4" stroke-width="1.2" fill="none"/></svg>
<div class="t" style="left:517.00px;top:514.56px;font-size:9.5px;color:#f6f6f6;transform:scaleX(0.9291);transform-origin:0 0;-webkit-text-stroke:0.4px #f6f6f6;">LIVE: 00:00:00</div>
<div class="a" style="left:584px;top:515.5px;width:8px;height:8px;border-radius:50%;background:#b0b0b0"></div>
<div class="t" style="left:600.50px;top:514.56px;font-size:9.5px;color:#f6f6f6;transform:scaleX(0.8906);transform-origin:0 0;-webkit-text-stroke:0.4px #f6f6f6;">REC: 00:00:00</div>
<div class="t" style="left:677.50px;top:514.56px;font-size:9.5px;color:#f6f6f6;transform:scaleX(0.9140);transform-origin:0 0;-webkit-text-stroke:0.4px #f6f6f6;">CPU: 0.4%, 60.00 fps</div>
</body></html>
